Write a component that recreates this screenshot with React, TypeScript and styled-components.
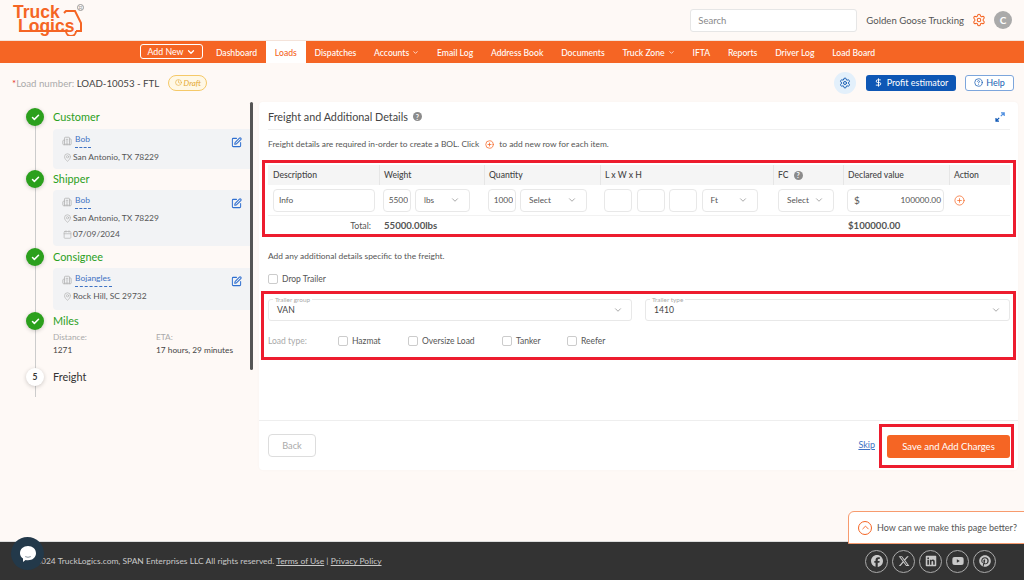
import React from "react";
import styled, { createGlobalStyle } from "styled-components";
import {
  Building2, Calendar, Check, ChevronDown, ChevronUp, CircleHelp, CirclePlus, Clock, DollarSign, MapPin, Settings, SquarePen,
} from "lucide-react";
import { FaFacebook, FaLinkedin, FaPinterest, FaXTwitter, FaYoutube } from "react-icons/fa6";

const font = `Lato, "Open Sans", Arial, sans-serif`;

const Global = createGlobalStyle`
  * { box-sizing: border-box; }
  html, body { margin: 0; padding: 0; background: #fef9f6; }
  body { font-family: ${font}; color: #3b3b3b; }
  input { font-family: ${font}; }
`;

const Page = styled.div`
  position: relative; width: 1024px; height: 580px; overflow: hidden;
  display: flex; flex-direction: column; background: #fef9f6;
`;
const Header = styled.header`
  height: 41px; flex: none; display: flex; align-items: center; padding: 0 12px 0 13px;
  border-bottom: 1px solid #f4e3da;
`;
const Logo = styled.div`
  position: relative; width: 72px; height: 32px; color: #f56524; font-family: "Liberation Sans", Arial, sans-serif;
  font-weight: 700; font-size: 17.5px; line-height: 14px; padding-top: 1px;
  & > span { display: block; }
  & > span + span { padding-left: 5px; }
  & > svg { position: absolute; left: 0; top: 0; }
`;
const Mark = styled.sup`
  position: absolute; left: 64px; top: 0; font-size: 5px; line-height: 6px; width: 7px; height: 7px; margin: 0;
  border: 1px solid #999; border-radius: 50%; color: #999; text-align: center; font-weight: 400;
`;
const Search = styled.input`
  margin-left: auto; width: 167px; height: 23px; background: #fff; border: 1px solid #e6e6e6; border-radius: 3px;
  padding: 0 7px; font-size: 9.5px; outline: none;
  &::placeholder { color: #888; }
`;
const Company = styled.span` margin-left: 9px; font-size: 9.6px; color: #555; white-space: nowrap; `;
const OrangeGear = styled(Settings)` margin-left: 8px; color: #f56524; `;
const Avatar = styled.div`
  margin-left: 8px; width: 18px; height: 18px; border-radius: 50%; background: #aaa; color: #fff;
  display: flex; align-items: center; justify-content: center; font-size: 10px; font-weight: 700;
`;
const Nav = styled.nav`
  height: 22px; flex: none; background: #f56524; display: flex; align-items: stretch; padding-left: 140px;
`;
const AddNew = styled.button`
  width: 63px; height: 15px; margin: 3px 4px 0 0; border: 1px solid #fff; border-radius: 3px; background: transparent;
  color: #fff; font-family: ${font}; font-size: 8.8px; padding: 0; display: flex; align-items: center; justify-content: center; gap: 2px;
`;
const NavItem = styled.a<{ $active?: boolean }>`
  display: flex; align-items: center; gap: 3px; padding: 0 8.9px; white-space: nowrap; font-size: 8.62px; font-weight: 500;
  background: ${p => (p.$active ? "#fff" : "transparent")};
  color: ${p => (p.$active ? "#f56524" : "#fff")};
`;
const SubBar = styled.div`
  height: 39px; flex: none; display: flex; align-items: center; padding: 0 10px 0 12px;
`;
const LoadLabel = styled.span` font-size: 9.7px; color: #aaa; white-space: nowrap; `;
const Req = styled.span` color: #e8352c; `;
const LoadNum = styled.span` color: #444; `;
const Draft = styled.span`
  margin-left: 9px; width: 39px; height: 16px; border: 1px solid #f5c969; background: #fff8e6; border-radius: 8px;
  color: #e4a934; font-size: 8px; font-style: italic; display: flex; align-items: center; justify-content: center; gap: 2px;
`;
const GearCircle = styled.div`
  margin-left: auto; width: 22px; height: 22px; border-radius: 50%; background: #e3f0fb; color: #1a5fb4;
  display: flex; align-items: center; justify-content: center;
`;
const Profit = styled.button`
  margin-left: 10px; width: 90px; height: 16px; background: #0e57b5; border: 0; border-radius: 3px; color: #fff; padding: 0;
  font-family: ${font}; font-size: 9px; display: flex; align-items: center; justify-content: center; gap: 4px;
`;
const Help = styled.button`
  margin-left: 9px; width: 49px; height: 16px; background: #fff; border: 1px solid #7da6dc; border-radius: 3px; color: #1a5fb4; padding: 0;
  font-family: ${font}; font-size: 9px; display: flex; align-items: center; justify-content: center; gap: 3px;
`;
const Main = styled.main`
  flex: 1; min-height: 0; display: grid; grid-template-columns: 254px 759px; column-gap: 5px; align-items: start;
`;
const Sidebar = styled.aside`
  position: relative; height: 300px; padding: 6px 4px 0 26px;
  &::before { content: ""; position: absolute; left: 35px; top: 15px; bottom: 5px; width: 1px; background: #ccc; }
  &::after { content: ""; position: absolute; right: 1px; top: 0; height: 268px; width: 3px; background: #555; border-radius: 2px; }
`;
const Step = styled.section<{ $gap: number }>`
  position: relative; display: grid; grid-template-columns: 18px 1fr; column-gap: 9px; margin-bottom: ${p => p.$gap}px;
`;
const Marker = styled.div<{ $done?: boolean }>`
  width: 18px; height: 18px; border-radius: 50%; background: ${p => (p.$done ? "#2ba01d" : "#fff")};
  color: ${p => (p.$done ? "#fff" : "#333")}; display: flex; align-items: center; justify-content: center;
  font-size: 8.5px; font-weight: 700; box-shadow: 0 1px 4px rgba(0,0,0,.2);
`;
const StepTitle = styled.div<{ $done?: boolean }>`
  font-size: 10.9px; line-height: 18px; color: ${p => (p.$done ? "#2ba01d" : "#333")};
`;
const StepBody = styled.div` min-width: 0; `;
const Panel = styled.div<{ $h: number; $top: number }>`
  position: relative; height: ${p => p.$h}px; margin-top: ${p => p.$top}px; background: #f2f3f5; border-radius: 4px 0 0 4px; padding: 4px 0 0 9px;
  display: flex; flex-direction: column;
`;
const PanelRow = styled.div`
  display: flex; align-items: center; gap: 1px; height: 16px; font-size: 8.45px; color: #555;
  & > svg { flex: none; color: #b5b5b5; width: 9px; height: 9px; margin-left: 1px; }
`;
const NameRow = styled(PanelRow)`
  gap: 3px;
  & > svg { margin-left: 0; width: 10px; height: 10px; }
`;
const Name = styled.span` color: #3e72c4; border-bottom: 1px dashed #3e72c4; line-height: 11px; padding: 0 1px 2px 0; `;
const Edit = styled(SquarePen)` position: absolute; right: 8px; top: 8px; color: #2f6fd0; `;
const Miles = styled.div`
  display: grid; grid-template-columns: 103px 1fr; font-size: 8.3px; line-height: 13px; margin-top: 1px; color: #444;
`;
const MilesLabel = styled.span` color: #aaa; `;
const Card = styled.div`
  height: 368px; background: #fff; border-radius: 4px; padding: 0 8px 0 9px; display: flex; flex-direction: column;
  box-shadow: 0 0 3px rgba(0,0,0,.03);
`;
const TitleRow = styled.div`
  height: 28px; flex: none; display: flex; align-items: center; gap: 5px; padding-top: 2px; border-bottom: 1px solid #f0f0f0; font-size: 10.8px; color: #444;
`;
const Info = styled.span`
  width: 9px; height: 9px; border-radius: 50%; background: #8b8b8b; color: #fff; font-size: 7px; font-weight: 700;
  display: inline-flex; align-items: center; justify-content: center; flex: none;
`;
const ExpandIcon = styled.svg` margin-left: auto; margin-right: 5px; `;
const Note = styled.p`
  margin: 0; height: 30px; flex: none; padding-bottom: 2px; display: flex; align-items: center; gap: 4px; font-size: 8.4px; color: #555;
`;
const PlusSmall = styled(CirclePlus)` color: #f56524; margin: 0 1px 0 2px; `;
const Highlight = styled.div`
  flex: none; margin: 0 -6px 0 -6px; border: 3px solid #ed1c2e; padding: 2px 3px 0;
`;
const Table = styled.div`
  display: grid; grid-template-columns: 111px 105px 116px 173px 70px 106px 61px;
`;
const Th = styled.div`
  height: 20px; background: #f5f5f5; border-left: 1px solid #e6e6e6; padding-left: 4px; display: flex; align-items: center; gap: 5px;
  font-size: 8.6px; color: #444; font-weight: 500;
  &:first-child { border-left: 0; padding-left: 5px; }
`;
const Td = styled.div`
  height: 31px; border-bottom: 1px solid #f2f2f2; padding-left: 4px; display: flex; align-items: center; gap: 4px;
`;
const DescCell = styled(Td)` padding-left: 5px; `;
const DimCell = styled(Td)` gap: 4.5px; `;
const FcCell = styled(Td)` padding-left: 5px; `;
const Field = styled.input<{ $w: number; $right?: boolean }>`
  width: ${p => p.$w}px; height: 23px; flex: none; background: #fff; border: 1px solid #e8e8e8; border-radius: 4px; outline: none;
  padding: 0 ${p => (p.$right ? 2 : 5)}px; font-size: 8.3px; color: #555; text-align: ${p => (p.$right ? "right" : "left")};
`;
const Select = styled.div<{ $w: number; $pad?: number }>`
  width: ${p => p.$w}px; height: 23px; flex: none; background: #fff; border: 1px solid #e8e8e8; border-radius: 4px;
  padding: 0 9px 0 ${p => p.$pad ?? 8}px; font-size: 8.2px; color: #555; display: flex; align-items: center; justify-content: space-between;
  & > svg { color: #999; }
`;
const Money = styled.div`
  width: 97px; height: 23px; flex: none; background: #fff; border: 1px solid #e8e8e8; border-radius: 4px; padding: 0 2px 0 6px;
  display: flex; align-items: center; justify-content: space-between; font-size: 8.3px; color: #555;
`;
const Dollar = styled.span` font-size: 10px; `;
const PlusAction = styled(CirclePlus)` color: #f56524; margin-left: 1px; `;
const TotalCell = styled.div<{ $strong?: boolean; $end?: boolean; $left?: number }>`
  height: 18px; display: flex; align-items: center; justify-content: ${p => (p.$end ? "flex-end" : "flex-start")};
  padding-left: ${p => p.$left ?? 0}px; padding-right: ${p => (p.$end ? 8 : 0)}px;
  font-size: ${p => (p.$strong ? 9.6 : 8.8)}px; font-weight: ${p => (p.$strong ? 700 : 400)}; color: #555;
`;
const AddNote = styled.p`
  margin: 0; height: 33px; flex: none; padding-top: 5px; display: flex; align-items: center; font-size: 8.4px; color: #555;
`;
const CheckBox = styled.span`
  width: 10px; height: 10px; flex: none; display: inline-block; background: #fff; border: 1px solid #ccc; border-radius: 2px;
`;
const CheckLabel = styled.label<{ $gap: number; $w?: number }>`
  display: flex; align-items: center; gap: ${p => p.$gap}px; font-size: 8.5px; color: #555; width: ${p => (p.$w ? `${p.$w}px` : "auto")};
`;
const DropRow = styled.div` height: 18px; flex: none; display: flex; align-items: center; `;
const SecondBox = styled(Highlight)`
  margin: 3px -6px 0 -7px; padding: 5px 3px 0 4px; height: 69px;
`;
const FieldsRow = styled.div` display: grid; grid-template-columns: 364px 365px; column-gap: 13px; `;
const FieldSet = styled.fieldset`
  margin: 0; padding: 0 8px; height: 22px; border: 1px solid #e8e8e8; border-radius: 3px; min-width: 0;
  display: flex; align-items: center; justify-content: space-between; font-size: 8.6px; color: #444;
  & > legend { height: 0; line-height: 0; font-size: 6.4px; color: #aaa; padding: 0 2px; margin-left: -4px; float: none; }
  & > svg { color: #999; }
`;
const FieldValue = styled.span` flex: 1; `;
const LoadTypes = styled.div`
  display: flex; align-items: center; height: 40px; font-size: 8.5px;
`;
const LoadTypeLabel = styled.span` width: 70px; color: #aaa; `;
const Spacer = styled.div` flex: 1; `;
const CardFooter = styled.div`
  height: 50px; flex: none; border-top: 1px solid #eee; margin: 0 -8px 0 -9px; padding: 0 0 0 9px; display: flex; align-items: center;
  position: relative;
`;
const Back = styled.button`
  width: 48px; height: 23px; background: #fff; border: 1px solid #ddd; border-radius: 4px; color: #aaa; font-family: ${font}; font-size: 9.2px; padding: 0;
`;
const Skip = styled.a` margin: 0 4px 2px auto; color: #3e72c4; font-size: 9px; text-decoration: underline; `;
const SaveWrap = styled.div`
  width: 135px; height: 44px; border: 3px solid #ed1c2e; padding: 7px 1px 0 5px; margin-right: 4px; margin-top: 3px; flex: none;
  align-self: flex-start;
`;
const Save = styled.button`
  width: 123px; height: 23px; background: #f56524; border: 0; border-radius: 3px; color: #fff; font-family: ${font}; font-size: 9.5px; padding: 0;
`;
const Footer = styled.footer`
  height: 39px; flex: none; background: #333; border-top: 1px solid #ddd; display: flex; align-items: center; padding: 0 28px 0 27px;
  font-size: 8.45px; color: #c9c9c9;
  & a { color: #c9c9c9; text-decoration: underline; }
`;
const Socials = styled.div` margin-left: auto; display: flex; gap: 4px; `;
const Social = styled.a`
  width: 23px; height: 23px; border: 1px solid #aaa; border-radius: 50%; display: flex; align-items: center; justify-content: center;
  color: #c9c9c9;
`;
const Chat = styled.div`
  position: absolute; left: 11px; top: 537px; width: 33px; height: 33px; border-radius: 50%; background: #23394a;
  display: flex; align-items: center; justify-content: center;
`;
const Feedback = styled.div`
  position: absolute; left: 848px; top: 511px; width: 180px; height: 33px; background: #fff; border: 1px solid #f79b6e;
  border-radius: 6px 0 0 0; display: flex; align-items: center; gap: 5px; padding-left: 9px; font-size: 9px; color: #555; white-space: nowrap;
`;
const FeedbackIcon = styled.span`
  width: 14px; height: 14px; border: 1px solid #f56524; border-radius: 50%; color: #f56524; display: flex; align-items: center; justify-content: center; flex: none;
`;

const navItems: [string, boolean?][] = [
  ["Dashboard"], ["Loads"], ["Dispatches"], ["Accounts", true], ["Email Log"], ["Address Book"], ["Documents"],
  ["Truck Zone", true], ["IFTA"], ["Reports"], ["Driver Log"], ["Load Board"],
];

export default function App() {
  return (
    <Page>
      <Global />
      <Header>
        <Logo>
          <span>Truck</span>
          <span>Logics</span>
          <svg width="72" height="32" viewBox="0 0 72 32" fill="none" stroke="#f56524" strokeWidth="2">
            <path d="M51 9 L53 7 H62 L68 19 V27 H63" />
            <path d="M63 27 A5 5 0 0 1 53 27 H6" />
          </svg>
          <Mark>R</Mark>
        </Logo>
        <Search placeholder="Search" />
        <Company>Golden Goose Trucking</Company>
        <OrangeGear size={14} strokeWidth={1.8} />
        <Avatar>C</Avatar>
      </Header>
      <Nav>
        <AddNew>Add New <ChevronDown size={10} strokeWidth={3} /></AddNew>
        {navItems.map(([label, caret]) => (
          <NavItem key={label} $active={label === "Loads"}>
            {label}
            {caret && <ChevronDown size={7} strokeWidth={2.5} />}
          </NavItem>
        ))}
      </Nav>
      <SubBar>
        <LoadLabel><Req>*</Req>Load number: <LoadNum>LOAD-10053 - FTL</LoadNum></LoadLabel>
        <Draft><Clock size={7} />Draft</Draft>
        <GearCircle><Settings size={12} strokeWidth={2} /></GearCircle>
        <Profit><DollarSign size={9} strokeWidth={2.5} />Profit estimator</Profit>
        <Help><CircleHelp size={9} />Help</Help>
      </SubBar>
      <Main>
        <Sidebar>
          <Step $gap={1}>
            <Marker $done><Check size={9} strokeWidth={4} /></Marker>
            <StepBody>
              <StepTitle $done>Customer</StepTitle>
              <Panel $h={40} $top={3}>
                <NameRow><Building2 /><Name>Bob</Name></NameRow>
                <PanelRow><MapPin />San Antonio, TX 78229</PanelRow>
                <Edit size={11} strokeWidth={2.2} />
              </Panel>
            </StepBody>
          </Step>
          <Step $gap={2}>
            <Marker $done><Check size={9} strokeWidth={4} /></Marker>
            <StepBody>
              <StepTitle $done>Shipper</StepTitle>
              <Panel $h={56} $top={2}>
                <NameRow><Building2 /><Name>Bob</Name></NameRow>
                <PanelRow><MapPin />San Antonio, TX 78229</PanelRow>
                <PanelRow><Calendar />07/09/2024</PanelRow>
                <Edit size={11} strokeWidth={2.2} />
              </Panel>
            </StepBody>
          </Step>
          <Step $gap={2}>
            <Marker $done><Check size={9} strokeWidth={4} /></Marker>
            <StepBody>
              <StepTitle $done>Consignee</StepTitle>
              <Panel $h={42} $top={2}>
                <NameRow><Building2 /><Name>Bojangles</Name></NameRow>
                <PanelRow><MapPin />Rock Hill, SC 29732</PanelRow>
                <Edit size={11} strokeWidth={2.2} />
              </Panel>
            </StepBody>
          </Step>
          <Step $gap={11}>
            <Marker $done><Check size={9} strokeWidth={4} /></Marker>
            <StepBody>
              <StepTitle $done>Miles</StepTitle>
              <Miles>
                <MilesLabel>Distance:</MilesLabel>
                <MilesLabel>ETA:</MilesLabel>
                <span>1271</span>
                <span>17 hours, 29 minutes</span>
              </Miles>
            </StepBody>
          </Step>
          <Step $gap={0}>
            <Marker>5</Marker>
            <StepBody><StepTitle>Freight</StepTitle></StepBody>
          </Step>
        </Sidebar>
        <Card>
          <TitleRow>
            Freight and Additional Details <Info>?</Info>
            <ExpandIcon width="10" height="10" viewBox="0 0 10 10" fill="none" strokeWidth="1.2">
              <path d="M5.8 4.2 L9 1 M6 .8 H9.2 V4" stroke="#4f8fe0" />
              <path d="M4.2 5.8 L1 9 M1 6 V9.2 H4" stroke="#0e57b5" />
            </ExpandIcon>
          </TitleRow>
          <Note>Freight details are required in-order to create a BOL. Click <PlusSmall size={9} /> to add new row for each item.</Note>
          <Highlight>
            <Table>
              <Th>Description</Th>
              <Th>Weight</Th>
              <Th>Quantity</Th>
              <Th>L x W x H</Th>
              <Th>FC <Info>?</Info></Th>
              <Th>Declared value</Th>
              <Th>Action</Th>

              <DescCell><Field $w={102} defaultValue="Info" /></DescCell>
              <Td><Field $w={28} $right defaultValue="5500" /><Select $w={55}>lbs<ChevronDown size={10} /></Select></Td>
              <Td><Field $w={28} $right defaultValue="1000" /><Select $w={67}>Select<ChevronDown size={10} /></Select></Td>
              <DimCell><Field $w={28} aria-label="Length" /><Field $w={28} aria-label="Width" /><Field $w={28} aria-label="Height" /><Select $w={56}>Ft<ChevronDown size={10} /></Select></DimCell>
              <FcCell><Select $w={56}>Select<ChevronDown size={10} /></Select></FcCell>
              <Td><Money><Dollar>$</Dollar>100000.00</Money></Td>
              <Td><PlusAction size={11} strokeWidth={1.6} /></Td>

              <TotalCell $end>Total:</TotalCell>
              <TotalCell $strong $left={5}>55000.00lbs</TotalCell>
              <TotalCell />
              <TotalCell />
              <TotalCell />
              <TotalCell $strong $left={5}>$100000.00</TotalCell>
              <TotalCell />
            </Table>
          </Highlight>
          <AddNote>Add any additional details specific to the freight.</AddNote>
          <DropRow><CheckLabel $gap={4}><CheckBox />Drop Trailer</CheckLabel></DropRow>
          <SecondBox>
            <FieldsRow>
              <FieldSet>
                <legend>Trailer group</legend>
                <FieldValue>VAN</FieldValue>
                <ChevronDown size={10} />
              </FieldSet>
              <FieldSet>
                <legend>Trailer type</legend>
                <FieldValue>1410</FieldValue>
                <ChevronDown size={10} />
              </FieldSet>
            </FieldsRow>
            <LoadTypes>
              <LoadTypeLabel>Load type:</LoadTypeLabel>
              <CheckLabel $gap={4} $w={70}><CheckBox />Hazmat</CheckLabel>
              <CheckLabel $gap={4} $w={94}><CheckBox />Oversize Load</CheckLabel>
              <CheckLabel $gap={4} $w={65}><CheckBox />Tanker</CheckLabel>
              <CheckLabel $gap={4}><CheckBox />Reefer</CheckLabel>
            </LoadTypes>
          </SecondBox>
          <Spacer />
          <CardFooter>
            <Back>Back</Back>
            <Skip>Skip</Skip>
            <SaveWrap><Save>Save and Add Charges</Save></SaveWrap>
          </CardFooter>
        </Card>
      </Main>
      <Footer>
        <span>© 2024 TruckLogics.com, SPAN Enterprises LLC All rights reserved. <a>Terms of Use</a> | <a>Privacy Policy</a></span>
        <Socials>
          <Social><FaFacebook size={12} /></Social>
          <Social><FaXTwitter size={12} /></Social>
          <Social><FaLinkedin size={12} /></Social>
          <Social><FaYoutube size={12} /></Social>
          <Social><FaPinterest size={12} /></Social>
        </Socials>
      </Footer>
      <Chat>
        <svg width="18" height="18" viewBox="0 0 18 18">
          <path d="M9 1 C13.5 1 17 4 17 8.2 C17 12.4 13.5 15.2 9 15.2 C8.2 15.2 7.4 15.1 6.6 14.9 L4 17 L4 13.6 C2.2 12.2 1 10.4 1 8.2 C1 4 4.5 1 9 1 Z" fill="#fff" />
          <path d="M6.2 11.6 Q9 13 11.8 11.6" fill="none" stroke="#8b97a0" strokeWidth="1" />
        </svg>
      </Chat>
      <Feedback>
        <FeedbackIcon><ChevronUp size={11} strokeWidth={2} /></FeedbackIcon>
        How can we make this page better?
      </Feedback>
    </Page>
  );
}
